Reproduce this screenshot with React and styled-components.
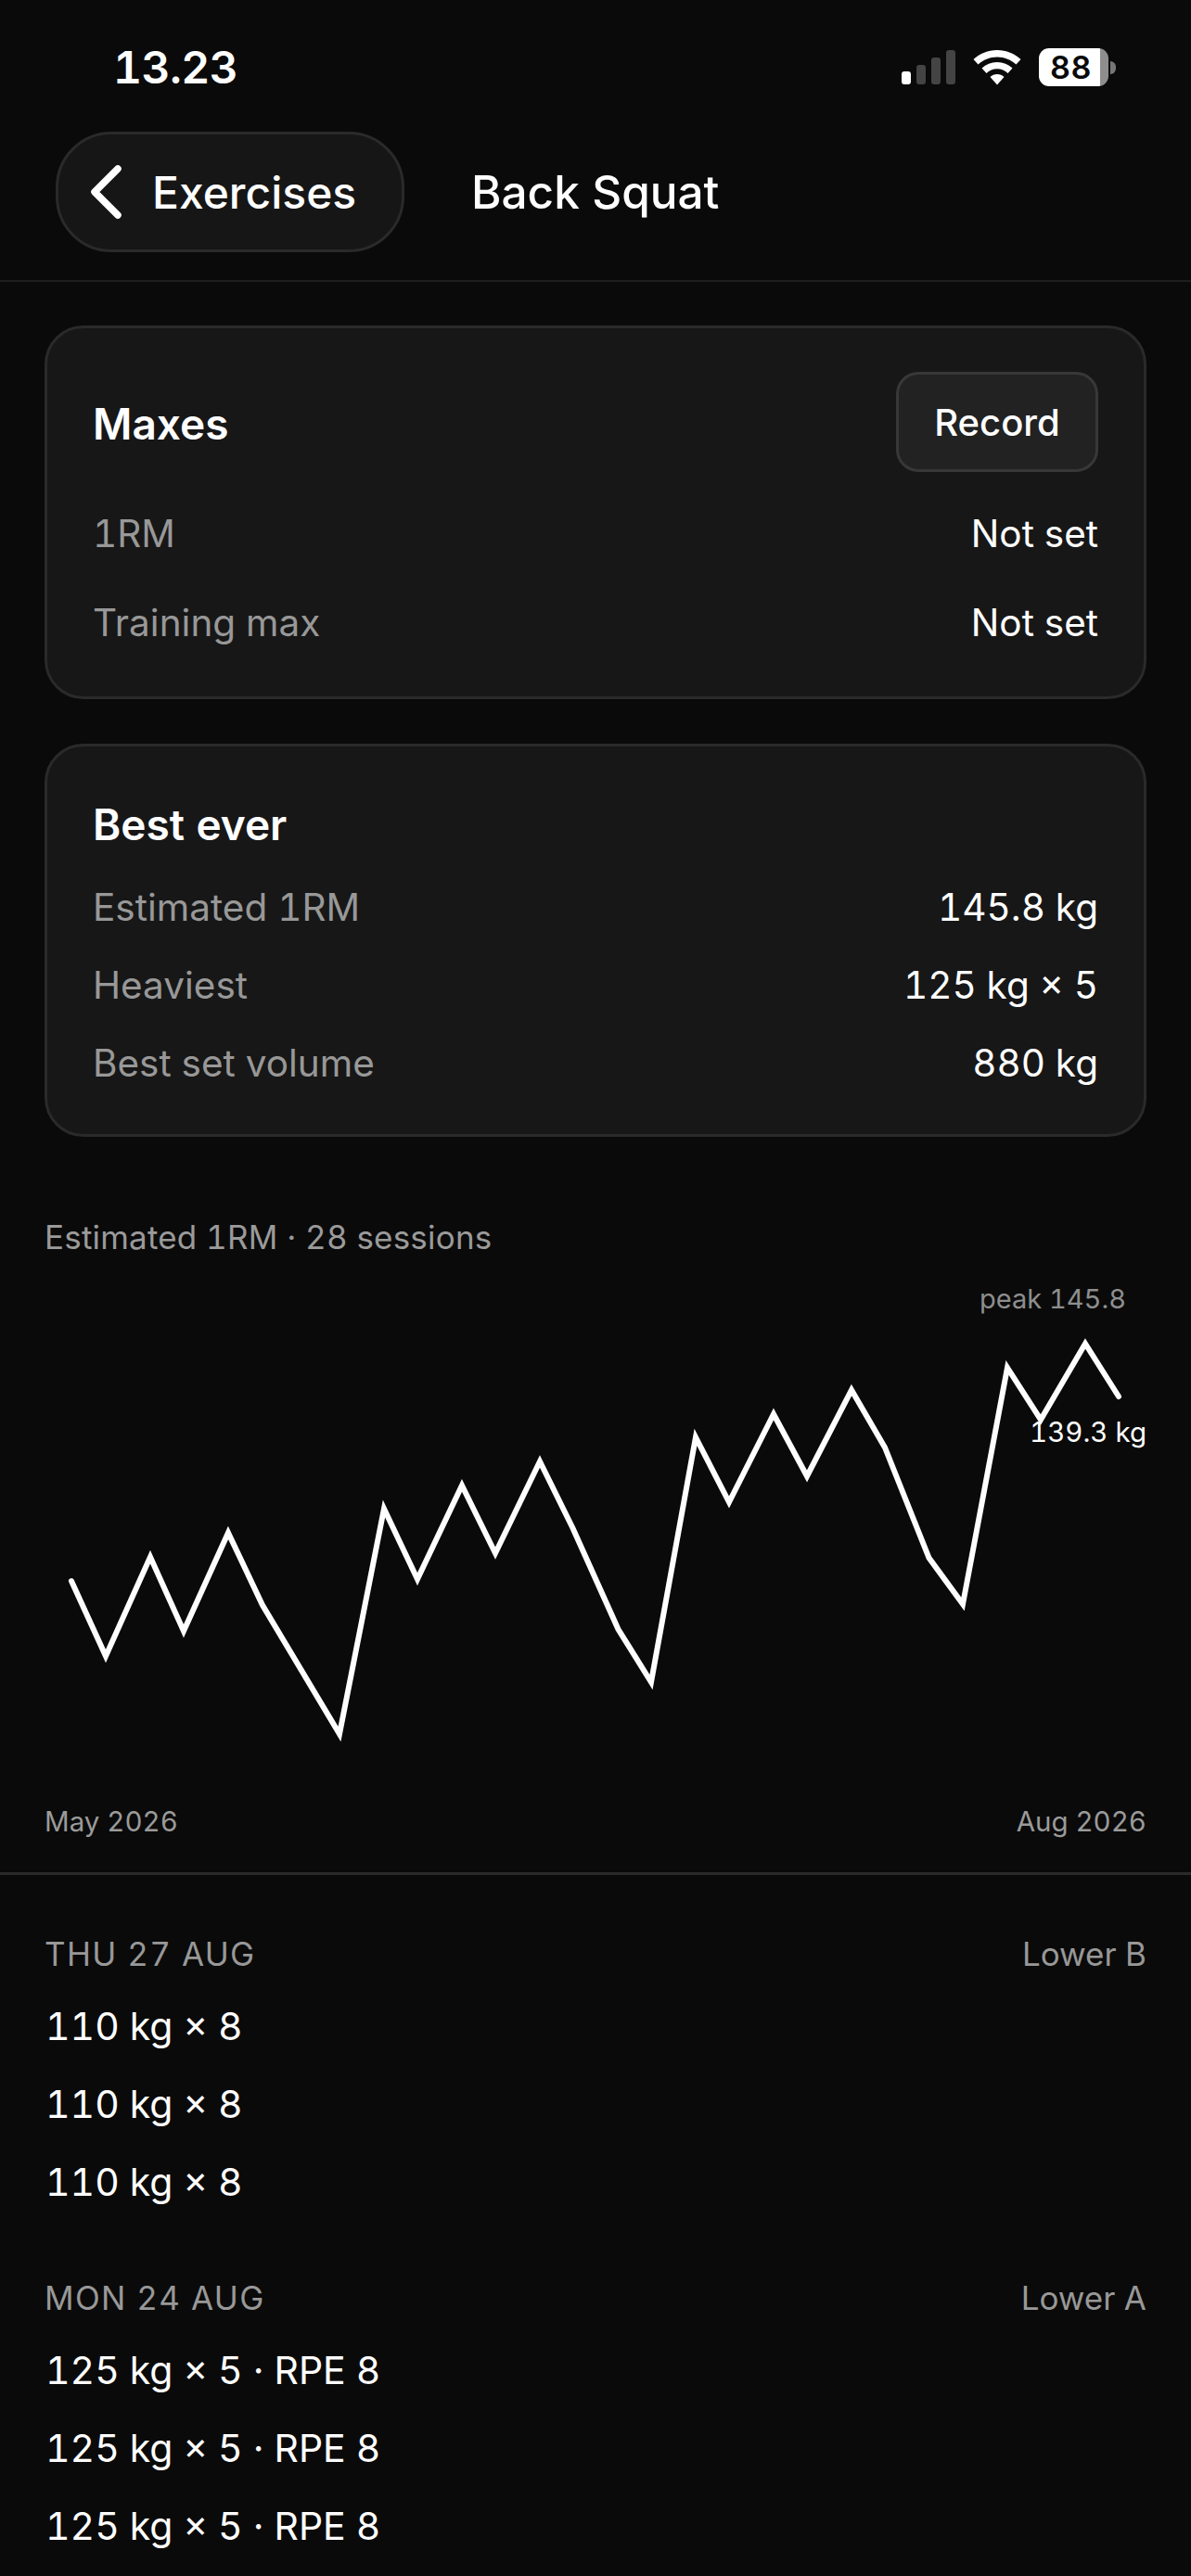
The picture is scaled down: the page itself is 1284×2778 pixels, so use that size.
import styled, { createGlobalStyle } from "styled-components";

const GlobalStyle = createGlobalStyle`
  html, body {
    margin: 0;
    padding: 0;
    background: #0a0a0a;
  }
  body {
    font-family: Inter, "Liberation Sans", sans-serif;
    font-variant-numeric: tabular-nums;
    color: #fff;
  }
`;

const Page = styled.div`
  width: 1284px;
  height: 2778px;
  overflow: hidden;
  background: #0a0a0a;
`;

const StatusBar = styled.div`
  height: 142px;
  box-sizing: border-box;
  padding: 47px 81px 0 122px;
  display: flex;
  justify-content: space-between;
  align-items: flex-start;
`;

const Clock = styled.div`
  font-size: 48px;
  line-height: 52px;
  font-weight: 600;
  letter-spacing: -0.6px;
`;

const StatusIcons = styled.div`
  display: flex;
  align-items: center;
  gap: 19px;
  margin-top: 5px;
`;

const Battery = styled.div`
  display: flex;
  align-items: center;
  gap: 2px;
`;

const BatteryBody = styled.div`
  width: 75px;
  height: 41px;
  border-radius: 11px;
  display: flex;
  align-items: center;
  justify-content: center;
  padding-right: 6px;
  box-sizing: border-box;
  font-size: 34px;
  font-weight: 600;
  letter-spacing: 0.5px;
  color: #0a0a0a;
  background: linear-gradient(90deg, #fff 0 88%, #8e8e8e 88% 100%);
`;

const BatteryCap = styled.div`
  width: 6px;
  height: 14px;
  border-radius: 0 7px 7px 0;
  background: #777;
`;

const NavBar = styled.div`
  height: 162px;
  box-sizing: border-box;
  padding-left: 60px;
  display: flex;
  align-items: flex-start;
  border-bottom: 2px solid #1f1f1f;
`;

const BackButton = styled.div`
  width: 376px;
  height: 130px;
  box-sizing: border-box;
  border: 3px solid #2a2a2a;
  border-radius: 60px;
  background: #161616;
  display: flex;
  align-items: center;
  padding-left: 32px;
  gap: 33px;
  font-size: 48px;
  font-weight: 500;
`;

const NavTitle = styled.div`
  margin-left: 72px;
  height: 130px;
  display: flex;
  align-items: center;
  font-size: 49.5px;
  font-weight: 500;
`;

const Cards = styled.div`
  padding: 47px 48px 0;
  display: flex;
  flex-direction: column;
  gap: 48px;
`;

const Card = styled.section`
  box-sizing: border-box;
  height: ${({ $height }) => $height}px;
  padding: ${({ $pad }) => $pad};
  border: 3px solid #2a2a2a;
  border-radius: 42px;
  background: #171717;
`;

const CardHead = styled.div`
  display: flex;
  justify-content: space-between;
  align-items: center;
  margin-bottom: 18px;

  h2 {
    padding-top: 3px;
  }
`;

const CardTitle = styled.h2`
  margin: 0 0 ${({ $gap }) => $gap || 0}px;
  font-size: 46px;
  line-height: 56px;
  font-weight: 600;
`;

const RecordButton = styled.div`
  width: 218px;
  height: 108px;
  box-sizing: border-box;
  border: 3px solid #383838;
  border-radius: 24px;
  background: #222;
  display: flex;
  align-items: center;
  justify-content: center;
  font-size: 40px;
  font-weight: 500;
`;

const StatRow = styled.div`
  display: flex;
  justify-content: space-between;
  align-items: center;
  height: ${({ $height }) => $height}px;
  font-size: 40.5px;
`;

const StatLabel = styled.span`
  color: #989898;
`;

const StatValue = styled.span`
  color: #fff;
`;

const ChartSection = styled.div`
  padding: 0 48px;
  margin-top: 86px;
`;

const ChartCaption = styled.div`
  font-size: 35px;
  line-height: 44px;
  letter-spacing: 0.2px;
  color: #9a9a9a;
`;

const ChartBox = styled.div`
  position: relative;
  height: 590px;
`;

const ChartLine = styled.svg`
  position: absolute;
  left: -48px;
  top: 0;
`;

const PeakLabel = styled.span`
  position: absolute;
  right: 22px;
  top: 27px;
  font-size: 29px;
  line-height: 36px;
  color: #8e8e8e;
`;

const LastLabel = styled.span`
  position: absolute;
  right: 0;
  top: 170px;
  font-size: 29.5px;
  line-height: 36px;
  color: #fff;
`;

const ChartAxis = styled.div`
  display: flex;
  justify-content: space-between;
  font-size: 29.5px;
  line-height: 36px;
  color: #9a9a9a;
`;

const Divider = styled.div`
  height: 3px;
  background: #2a2a2a;
  margin-top: 37px;
`;

const History = styled.div`
  padding: 63px 48px 0;
`;

const Session = styled.div`
  margin-bottom: 61px;
`;

const SessionHead = styled.div`
  display: flex;
  justify-content: space-between;
  align-items: center;
  height: 44px;
  margin-bottom: 14px;
  font-size: 35px;
  color: #989898;
`;

const SessionDate = styled.span`
  letter-spacing: 1.3px;
`;

const SetRow = styled.div`
  height: 84px;
  display: flex;
  align-items: center;
  padding-left: 1px;
  font-size: 41px;
`;

const points = [
  [77, 1705], [114, 1786], [162, 1679], [198, 1759], [246, 1653], [283, 1731],
  [366, 1870], [414, 1627], [450, 1703], [498, 1602], [534, 1675], [582, 1576],
  [617.5, 1648], [666.5, 1757], [702, 1814], [750, 1550], [786, 1620], [834, 1525],
  [870, 1592], [918, 1499], [954, 1561], [1001.5, 1680], [1038, 1730], [1086, 1475],
  [1122, 1531], [1170, 1449], [1206, 1506],
];

// chart box starts at y 1356 on the page
const chartPath = points.map(([x, y]) => `${x},${y - 1356}`).join(" ");

const sessions = [
  { date: "THU 27 AUG", name: "Lower B", sets: ["110 kg × 8", "110 kg × 8", "110 kg × 8"] },
  {
    date: "MON 24 AUG",
    name: "Lower A",
    sets: ["125 kg × 5 · RPE 8", "125 kg × 5 · RPE 8", "125 kg × 5 · RPE 8"],
  },
];

const App = () => {
  return (
    <Page>
      <GlobalStyle />
      <StatusBar>
        <Clock>13.23</Clock>
        <StatusIcons>
          <svg width="58" height="37" viewBox="0 0 58 37">
            <rect x="0" y="23" width="10" height="14" rx="3" fill="#fff" />
            <rect x="16" y="16" width="10" height="21" rx="3" fill="#444" />
            <rect x="32" y="8" width="10" height="29" rx="3" fill="#444" />
            <rect x="48" y="0" width="10" height="37" rx="3" fill="#444" />
          </svg>
          <svg width="52" height="38" viewBox="0 0 52 38">
            <path d="M26 0C16 0 7.500 3.800 0.500 10L5.500 15.500C11 10.500 18 7.500 26 7.500S41 10.500 46.500 15.500L51.500 10C44.500 3.800 36 0 26 0Z" fill="#fff" />
            <path d="M26 13C19.500 13 14 15.300 9.500 19.500L14.500 25C17.500 22 21.500 20.300 26 20.300S34.500 22 37.500 25L42.500 19.500C38 15.300 32.500 13 26 13Z" fill="#fff" />
            <path d="M26 26C23 26 20.500 27 18.500 29L26 37.500L33.500 29C31.500 27 29 26 26 26Z" fill="#fff" />
          </svg>
          <Battery>
            <BatteryBody>88</BatteryBody>
            <BatteryCap />
          </Battery>
        </StatusIcons>
      </StatusBar>
      <NavBar>
        <BackButton>
          <svg width="36" height="58" viewBox="0 0 36 58" fill="none">
            <path d="M32 4L7 29L32 54" stroke="#fff" strokeWidth="7.500" strokeLinecap="round" strokeLinejoin="round" />
          </svg>
          Exercises
        </BackButton>
        <NavTitle>Back Squat</NavTitle>
      </NavBar>
      <Cards>
        <Card $height={403} $pad="47px 49px 0">
          <CardHead>
            <CardTitle>Maxes</CardTitle>
            <RecordButton>Record</RecordButton>
          </CardHead>
          <StatRow $height={96}>
            <StatLabel>1RM</StatLabel>
            <StatValue>Not set</StatValue>
          </StatRow>
          <StatRow $height={96}>
            <StatLabel>Training max</StatLabel>
            <StatValue>Not set</StatValue>
          </StatRow>
        </Card>
        <Card $height={424} $pad="56px 49px 0">
          <CardTitle $gap={19}>Best ever</CardTitle>
          <StatRow $height={84}>
            <StatLabel>Estimated 1RM</StatLabel>
            <StatValue>145.8 kg</StatValue>
          </StatRow>
          <StatRow $height={84}>
            <StatLabel>Heaviest</StatLabel>
            <StatValue>125 kg × 5</StatValue>
          </StatRow>
          <StatRow $height={84}>
            <StatLabel>Best set volume</StatLabel>
            <StatValue>880 kg</StatValue>
          </StatRow>
        </Card>
      </Cards>
      <ChartSection>
        <ChartCaption>Estimated 1RM · 28 sessions</ChartCaption>
        <ChartBox>
          <ChartLine width="1284" height="590" viewBox="0 0 1284 590" fill="none">
            <polyline points={chartPath} stroke="#fff" strokeWidth="6" strokeLinecap="round" strokeLinejoin="miter" />
          </ChartLine>
          <PeakLabel>peak 145.8</PeakLabel>
          <LastLabel>139.3 kg</LastLabel>
        </ChartBox>
        <ChartAxis>
          <span>May 2026</span>
          <span>Aug 2026</span>
        </ChartAxis>
      </ChartSection>
      <Divider />
      <History>
        {sessions.map((session) => (
          <Session key={session.date}>
            <SessionHead>
              <SessionDate>{session.date}</SessionDate>
              <span>{session.name}</span>
            </SessionHead>
            {session.sets.map((set, i) => (
              <SetRow key={i}>{set}</SetRow>
            ))}
          </Session>
        ))}
      </History>
    </Page>
  );
};

export default App;
